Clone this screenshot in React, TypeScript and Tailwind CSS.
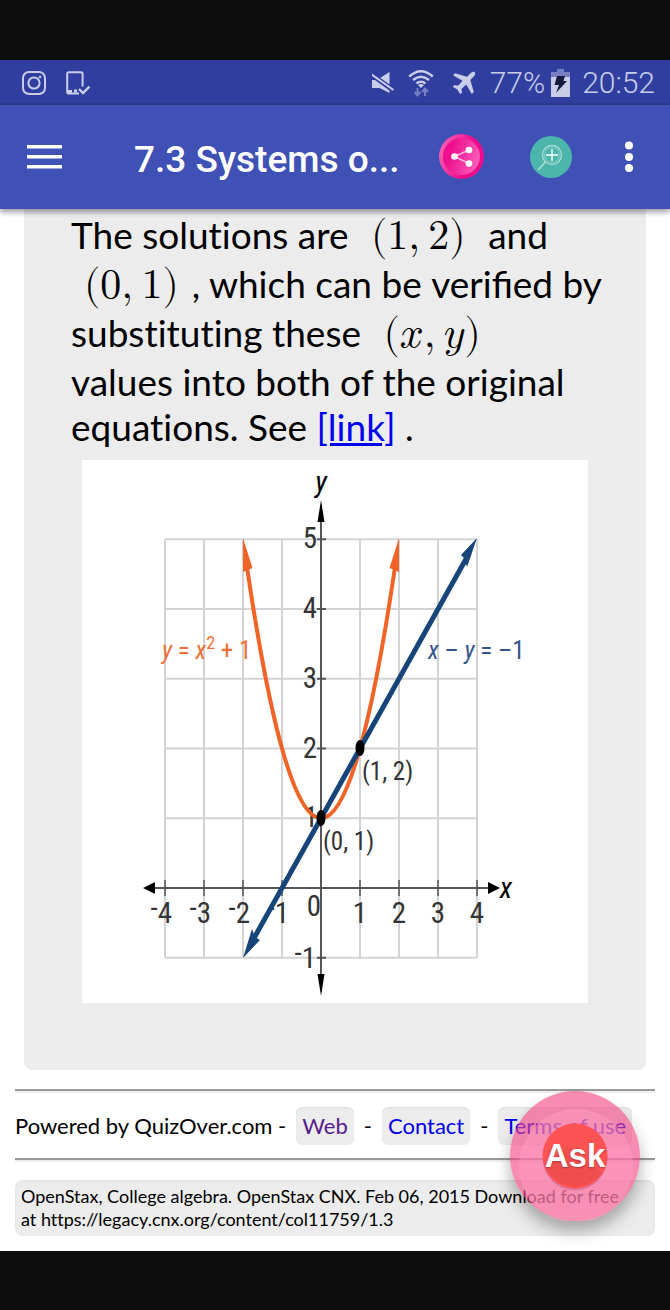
import type { ReactNode } from "react";

const X = (n: number) => 239 + 39 * n;
const Y = (n: number) => 428 - 69.75 * n;

function StatusBar() {
  return (
    <div className="flex h-[45px] items-center border-b-2 border-[#2c3a92] bg-[#303f9f] pt-[2px] pr-[15px] pl-[22px] text-[#c9cde8]">
      <svg className="h-6 w-6" viewBox="0 0 24 24" fill="none" stroke="currentColor" strokeWidth="2">
        <rect x="1" y="1" width="22" height="22" rx="6" />
        <circle cx="12" cy="12" r="5.6" />
        <circle cx="18" cy="6" r="1.3" fill="currentColor" stroke="none" />
      </svg>
      <svg className="ml-5 h-6 w-6" viewBox="0 0 24 24" fill="none" stroke="currentColor" strokeWidth="2">
        <path d="M13 22.5H3Q1.2 22.500 1.200 20.700V2.800Q1.200 1.200 2.800 1.200H15Q16.600 1.200 16.600 2.800V15.500" />
        <path d="M2 20.500H6M8 20H11" strokeWidth="3" />
        <path d="M13 18L17 22L23.500 15.500" strokeWidth="2.400" />
      </svg>
      <div className="ml-auto flex items-center">
        <svg className="h-6 w-6" viewBox="0 0 24 24" fill="currentColor">
          <path d="M17.500 1V14L8 7ZM0 9H3L17.500 19.500V22L7.500 17H0Z" />
          <path d="M-1 3L21.500 19" stroke="#303f9f" strokeWidth="4.500" />
          <path d="M-1 3L21.500 19" stroke="currentColor" strokeWidth="2" />
        </svg>
        <svg className="ml-3 h-7 w-[26px]" viewBox="0 0 26 28" fill="none" stroke="currentColor" strokeWidth="2.400">
          <path d="M1.200 7.500Q13 -3 24.800 7.500M5 11Q13 4.500 21 11M8.500 14.500Q13 11 17.500 14.500" />
          <path d="M10 16Q13 14 16 16L13 19Z" fill="currentColor" stroke="none" />
          <path d="M9.500 19V26M6.500 23L9.500 26.500L12.500 23M17 27V20M14 23L17 19.500L20 23" stroke="#7580c4" strokeWidth="2" />
        </svg>
        <svg className="ml-[18px] h-6 w-6" viewBox="0 0 24 24" fill="currentColor">
          <path d="M22.800 1.200C21.500 .2 19.800 1 18.500 2.300L15 5.700L3 2.200L1 4.200L10.500 9.800L6 14.700L2.500 14L.8 15.700L5.300 18.500L8.300 23.200L10 21.500L9.400 18L14.200 13.500L19.800 23L21.800 21L18.300 9L21.700 5.500C23 4.200 23.800 2.500 22.800 1.200Z" />
        </svg>
        <span className="ml-[14px] font-[Roboto,sans-serif] text-[30px] leading-9 font-light">77%</span>
        <svg className="ml-[6px] h-7 w-[19px]" viewBox="0 0 19 28">
          <path d="M6 0H13V3H19V8H0V3H6Z" fill="#7580c4" />
          <path d="M0 8H19V28H0Z" fill="#c9cde8" />
          <path d="M6 7H14L12.500 12H16L5 24L8 16H3.500Z" fill="#171b3b" />
        </svg>
        <span className="ml-3 font-[Roboto,sans-serif] text-[30px] leading-9 font-light">20:52</span>
      </div>
    </div>
  );
}

function AppBar() {
  return (
    <header className="relative z-10 flex h-[104px] items-center bg-[#3f51b5] pr-[29px] pl-[27px] text-white shadow-[0_3px_6px_rgba(0,0,0,0.4)]">
      <button aria-label="Open menu" className="h-[25px] w-[35px]">
        <svg viewBox="0 0 35 25" className="h-[25px] w-[35px]" fill="currentColor">
          <path d="M0 0H35V3.500H0ZM0 10H35V13.500H0ZM0 20H35V23.500H0Z" />
        </svg>
      </button>
      <h1 className="ml-[72px] min-w-0 flex-1 pt-[6px] font-[Roboto,sans-serif] text-[37px] leading-[46px] font-medium whitespace-nowrap">
        7.3 Systems o...
      </h1>
      <button aria-label="Share" className="h-[46px] w-[46px]">
        <svg viewBox="0 0 46 46" className="h-[46px] w-[46px]">
          <defs>
            <linearGradient id="share" x1="0" y1="0" x2="1" y2="0.3">
              <stop offset="0" stopColor="#ee0a90" />
              <stop offset="0.3" stopColor="#f0108f" />
              <stop offset="1" stopColor="#f557b4" />
            </linearGradient>
            <linearGradient id="rim" x1="0" y1="0.4" x2="0.6" y2="0.6">
              <stop offset="0" stopColor="#f55db2" />
              <stop offset="1" stopColor="#ef0b8d" />
            </linearGradient>
          </defs>
          <circle cx="22.500" cy="22.500" r="22.500" fill="url(#rim)" />
          <circle cx="22.500" cy="22.500" r="18.500" fill="url(#share)" />
          <path d="M30 16L15.500 22.500L30 29.500" stroke="#fbb4dc" strokeWidth="1.400" fill="none" />
          <g fill="#fff">
            <circle cx="30" cy="16" r="3.300" />
            <circle cx="15.500" cy="22.500" r="3.300" />
            <circle cx="30" cy="29.500" r="3.300" />
          </g>
        </svg>
      </button>
      <button aria-label="Zoom in" className="ml-[45px] h-[42px] w-[42px]">
        <svg viewBox="0 0 42 42" className="h-[42px] w-[42px]" fill="none" stroke="#a9dcd2">
          <circle cx="21" cy="21" r="21" fill="#4db6ac" stroke="none" />
          <circle cx="22" cy="19" r="9.500" strokeWidth="1.300" />
          <circle cx="22" cy="19" r="7.500" strokeWidth="0.600" />
          <path d="M15.500 26L8 34" strokeWidth="1.700" />
          <path d="M22 13V25M16 19H28" stroke="#d6f0ea" strokeWidth="1.800" />
        </svg>
      </button>
      <button aria-label="More options" className="ml-[49px] h-8 w-5">
        <svg viewBox="0 0 20 32" className="h-8 w-5" fill="currentColor">
          <circle cx="8" cy="4.500" r="4" />
          <circle cx="8" cy="16" r="4" />
          <circle cx="8" cy="27" r="4" />
        </svg>
      </button>
    </header>
  );
}

function MathText({ children }: { children: ReactNode }) {
  return (
    <span className="mx-[13px] inline-block font-['Latin_Modern_Math','Liberation_Serif',serif] text-[42px] leading-[49px]">
      {children}
    </span>
  );
}

function Graph() {
  const cols = [-4, -3, -2, -1, 0, 1, 2, 3, 4];
  const rows = [-1, 0, 1, 2, 3, 4, 5];
  return (
    <svg
      viewBox="0 0 506 543"
      role="img"
      aria-label="Line and parabola intersecting at two points"
      className="block w-full bg-white font-['Roboto_Condensed','Liberation_Sans',sans-serif]"
    >
      <g stroke="#d2d3d5" strokeWidth="2">
        {cols.map((n) => <path key={n} d={`M${X(n)} ${Y(5)}V${Y(-1)}`} />)}
        {rows.map((n) => <path key={n} d={`M${X(-4)} ${Y(n)}H${X(4)}`} />)}
      </g>
      <g stroke="#55565a" strokeWidth="2">
        <path d="M68 428H410M239 58V522" />
        {cols.filter((n) => n !== 0).map((n) => <path key={n} d={`M${X(n)} 420V436`} strokeWidth="1.500" />)}
        {rows.filter((n) => n !== 0).map((n) => <path key={n} d={`M235 ${Y(n)}H244`} />)}
      </g>
      <path d="M239 40L242.500 62H235.500ZM239 536L242.500 514H235.500ZM61 428L73 422V434ZM418 428L406 422V434Z" />
      <g fill="#333" fontSize="29">
        {[2, 3, 4, 5].map((n) => <text key={n} x="235" y={Y(n) + 9} textAnchor="end">{n}</text>)}
        <text x="236" y="367" textAnchor="end">1</text>
        <text x="234" y="508" textAnchor="end"><tspan dy="-5">-</tspan><tspan dy="5">1</tspan></text>
        <text x="232" y="456" textAnchor="middle">0</text>
        {[1, 2, 3, 4].map((n) => <text key={n} x={X(n)} y="463" textAnchor="middle">{n}</text>)}
        {[1, 2, 3, 4].map((n) => (
          <text key={n} x={X(-n) + 7} y="463" textAnchor="end"><tspan dy="-5">-</tspan><tspan dy="5">{n}</tspan></text>
        ))}
      </g>
      <g fill="#333" fontSize="25">
        <text x="280" y="320">(1, 2)</text>
        <text x="241" y="390">(0, 1)</text>
      </g>
      <g fontSize="29" fontStyle="italic">
        <text x="239" y="32" textAnchor="middle">y</text>
        <text x="424" y="438" textAnchor="middle">x</text>
      </g>
      <text x="80" y="199" fontSize="25" fill="#ee7036">
        <tspan fontStyle="italic">y</tspan> = <tspan fontStyle="italic">x</tspan>
        <tspan fontSize="18" dy="-10">2</tspan>
        <tspan dy="10"> + 1</tspan>
      </text>
      <text x="346" y="199" fontSize="25" fill="#34548c">
        <tspan fontStyle="italic">x</tspan> – <tspan fontStyle="italic">y</tspan> = –1
      </text>
      <path
        d={`M${X(-1.9)} ${Y(4.61)}Q${X(0)} ${Y(-2.61)} ${X(1.9)} ${Y(4.61)}`}
        fill="none"
        stroke="#f06427"
        strokeWidth="4"
      />
      <path d="M161 78L170.500 108L161 112ZM317 78L307.500 108L317 112Z" fill="#f06427" />
      <path d={`M${X(-1.8)} ${Y(-0.8)}L${X(3.8)} ${Y(4.8)}`} stroke="#174579" strokeWidth="5" />
      <path d="M395 78L379 95L382 98L385 107ZM161 498L170 469L173 477L178 480Z" fill="#174579" />
      <ellipse cx="239" cy="358" rx="4.500" ry="8" />
      <ellipse cx="278" cy="288" rx="4.500" ry="8" />
    </svg>
  );
}

function Rule() {
  return <hr className="h-1 border-t-2 border-b-2 border-t-[#999] border-b-[#eee]" />;
}

function FooterLink({ className, children }: { className: string; children: string }) {
  return (
    <a href="#" className={`rounded-md bg-[#ececec] px-[6px] py-[6px] shadow-[inset_0_1px_2px_rgba(0,0,0,0.06)] ${className}`}>
      {children}
    </a>
  );
}

function AskButton() {
  return (
    <button
      aria-label="Ask"
      className="absolute right-[30px] bottom-[30px] h-[130px] w-[130px] rounded-full shadow-[0_10px_16px_rgba(0,0,0,0.3)]"
    >
      <svg viewBox="0 0 130 130" className="h-[130px] w-[130px]">
        <circle cx="65" cy="65" r="65" fill="#f24585" fillOpacity="0.620" />
        <circle cx="66" cy="75" r="57" fill="#ffa0c0" fillOpacity="0.400" />
        <circle cx="65" cy="67" r="32.500" fill="#c05078" fillOpacity="0.400" />
        <circle cx="65" cy="65" r="32.500" fill="#ff5252" />
        <path d="M36 76L57 55L92 82A32.500 32.500 0 0 1 36 76Z" fill="#e94b4b" fillOpacity="0.700" />
        <text
          x="65"
          y="76"
          textAnchor="middle"
          fill="#fff"
          className="font-['Liberation_Sans',sans-serif] text-[33px] font-bold [text-shadow:0_1px_2px_rgba(0,0,0,0.3)]"
        >
          Ask
        </text>
      </svg>
    </button>
  );
}

export default function App() {
  return (
    <div className="bg-[#0d0d0d] py-[60px]">
      <StatusBar />
      <AppBar />
      <div className="relative bg-white px-[15px] pb-[15px] font-[Lato,sans-serif] text-black [font-variant-ligatures:none]">
        <main className="mx-[9px] rounded-b-lg bg-[#ececec] px-[47px] pt-[3px] pb-[67px]">
          <p className="text-[37px] leading-[45px] whitespace-nowrap">
            <span className="block">The solutions are <MathText>(1,&#8201;2)</MathText> and</span>
            <span className="block">
              <MathText>(0,&#8201;1)</MathText>, which can be <span className="[font-variant-ligatures:normal]">verified</span> by
            </span>
            <span className="block">substituting these <MathText>(𝑥,&#8201;𝑦)</MathText></span>
            <span className="block">values into both of the original</span>
            <span className="block">
              equations. See <a href="#" className="text-[#0000ee] underline">[link]</a> .
            </span>
          </p>
          <div className="mx-[11px] mt-[11px]">
            <Graph />
          </div>
        </main>
        <footer className="pt-[19px]">
          <Rule />
          <div className="flex h-[65px] items-center gap-[10px] text-[22px] leading-[26px] whitespace-nowrap">
            <span>Powered by QuizOver.com -</span>
            <FooterLink className="text-[#551a8b]">Web</FooterLink>
            <span>-</span>
            <FooterLink className="text-[#0000ee]">Contact</FooterLink>
            <span>-</span>
            <FooterLink className="text-[#0000ee]">Terms of use</FooterLink>
          </div>
          <Rule />
          <p className="mt-[18px] rounded-lg bg-[#ececec] py-[5px] pr-5 pl-[6px] text-[18px] leading-[23px] shadow-[inset_0_1px_3px_rgba(0,0,0,0.06)]">
            OpenStax, College algebra. OpenStax CNX. Feb 06, 2015 Download for free at https://legacy.cnx.org/content/col11759/1.3
          </p>
        </footer>
        <AskButton />
      </div>
    </div>
  );
}
